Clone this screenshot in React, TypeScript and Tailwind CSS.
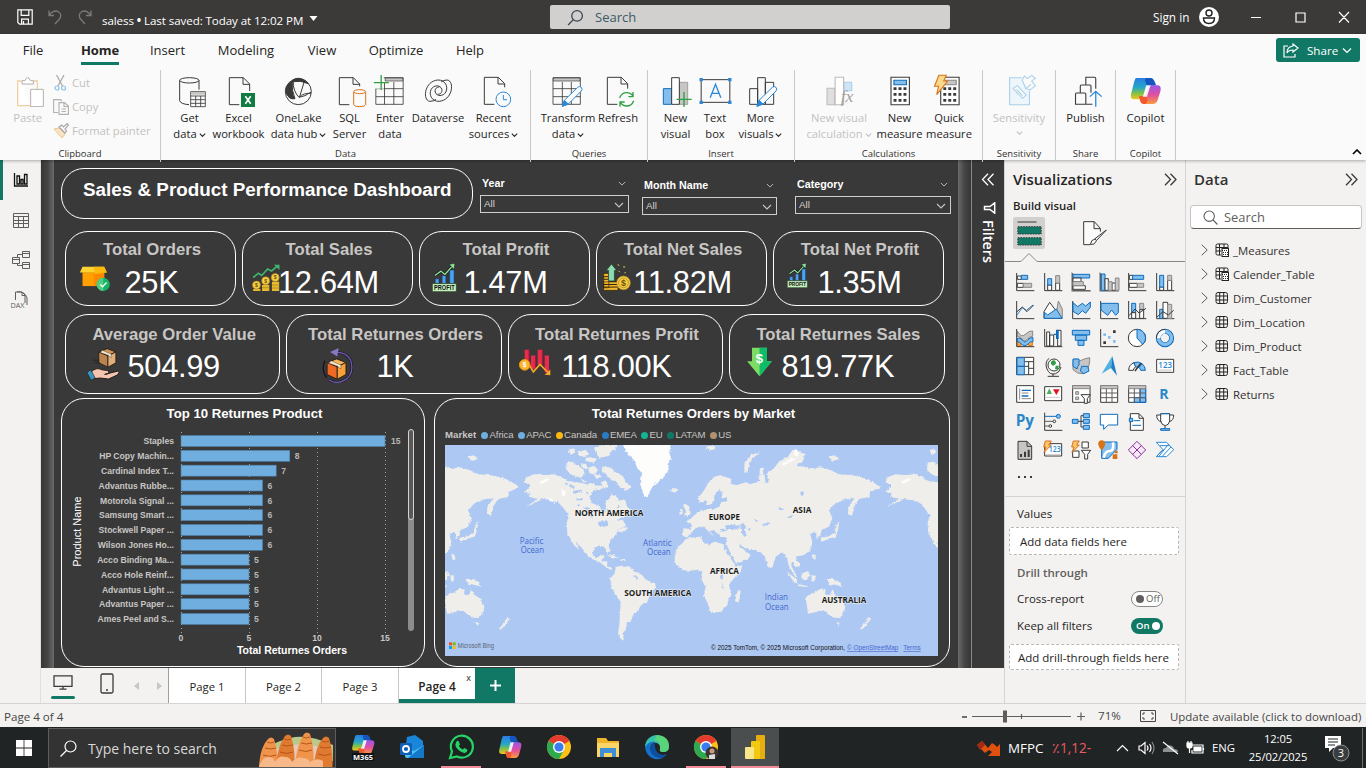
import React from "react";

type Kids = { children?: React.ReactNode };

const INK = "#3b3a39";
const BLUE = "#0f6cbd";
const SKY = "#83beec";
const GREY = "#c8c6c4";

function Chevron({ className = "", color = "currentColor", w = 1.2 }: { className?: string; color?: string; w?: number }) {
  return (
    <svg viewBox="0 0 10 6" className={className} fill="none" stroke={color} strokeWidth={w}>
      <path d="M1 1l4 4 4-4" />
    </svg>
  );
}

/* ---------------------------------------------------------------- title bar */

function TitleBar() {
  return (
    <header className="flex h-[34px] shrink-0 items-center bg-[#3b3a39] text-white">
      <div className="flex w-[550px] items-center">
        <svg viewBox="0 0 16 16" className="ml-[17px] h-[16px] w-[16px]" fill="none" stroke="#fff" strokeWidth="1.2">
          <path d="M.8.8h14.400v14.400H2.600L.8 13.400zM4.200.8v5.600h7.600V.8M4.600 15v-4.800h6.800V15M6.500 15v-3" />
        </svg>
        <svg viewBox="0 0 16 16" className="ml-[14px] h-[16px] w-[16px]" fill="none" stroke="#7d7b79" strokeWidth="1.3">
          <path d="M2 1.500v5h5M2 6.500C4 3 8 1 11 2.500c3.500 2 3.500 5.500 1 8L8 15" />
        </svg>
        <svg viewBox="0 0 16 16" className="ml-[14px] h-[16px] w-[16px]" fill="none" stroke="#7d7b79" strokeWidth="1.3">
          <path d="M14 1.500v5H9M14 6.500C12 3 8 1 5 2.500c-3.500 2-3.500 5.500-1 8L8 15" />
        </svg>
        <span className="ml-[9px] mt-[7px] whitespace-nowrap text-[11.600px] leading-4 tracking-[-0.090px]">saless <b>•</b> Last saved: Today at 12:02 PM</span>
        <svg viewBox="0 0 8 5" className="ml-[6px] mt-[2px] h-[5px] w-[9px]" fill="#fff"><path d="M0 0h8L4 5z" /></svg>
      </div>
      <div className="flex h-[24px] w-[400px] items-center rounded-[2px] bg-[#d2d0ce] text-[#3b5a66]">
        <svg viewBox="0 0 16 16" className="ml-[17px] h-[17px] w-[17px]" fill="none" stroke="#33474f" strokeWidth="1.2"><circle cx="9.500" cy="6.500" r="5" /><path d="M6 10l-5 5" /></svg>
        <span className="ml-[11px] pt-[1px] text-[13px]">Search</span>
      </div>
      <span className="ml-[203px] w-[46px] whitespace-nowrap pt-[2px] text-[11.800px]">Sign in</span>
      <svg viewBox="0 0 20 20" className="h-[20px] w-[20px]"><circle cx="10" cy="10" r="10" fill="#fff" /><circle cx="10" cy="6" r="3" fill="none" stroke="#222" strokeWidth="1.400" /><path d="M4.500 11h11c0 4-2.500 5.500-5.500 5.500S4.500 15 4.500 11z" fill="none" stroke="#222" strokeWidth="1.400" /></svg>
      <svg viewBox="0 0 100 12" className="ml-[32px] h-[12px] w-[100px]" fill="none" stroke="#fff" strokeWidth="1.200"><path d="M0 6.500h10M45 2h9v9h-9zM88 1l10 10.500M98 1L88 11.500" /></svg>
    </header>
  );
}

/* ------------------------------------------------------------------- ribbon */

function Group({ label, className, children }: Kids & { label: string; className: string }) {
  return (
    <section className={`flex h-[92px] shrink-0 flex-col border-r border-[#cbc9c7] ${className}`}>
      <div className="flex h-[75px] justify-center">{children}</div>
      <div className="text-center text-[9.500px] leading-[17px] text-[#323130]">{label}</div>
    </section>
  );
}

function Tool({ w, vb, lines, drop, off, children }: Kids & { w: string; vb: string; lines: string[]; drop?: boolean; off?: boolean }) {
  return (
    <div className={`flex ${w} shrink-0 flex-col items-center pt-[5px] ${off ? "text-[#c3c1bf]" : "text-[#252423]"}`}>
      <svg viewBox={vb} preserveAspectRatio="none" className="h-[32px] w-[32px] shrink-0 overflow-visible" fill="none" stroke={INK} strokeWidth="3">{children}</svg>
      <div className="mt-[3px] whitespace-nowrap text-[11.200px] leading-4">{lines[0]}</div>
      <div className="flex items-center whitespace-nowrap text-[11.200px] leading-4">
        {lines[1]}
        {drop && <Chevron className={`${lines[1] ? "ml-[2px] mt-[2px]" : "mt-[5px]"} h-[4px] w-[7px]`} w={1.700} />}
      </div>
    </div>
  );
}

function CopilotMark({ className, vb }: { className: string; vb: string }) {
  return (
    <svg viewBox={vb} preserveAspectRatio="none" className={className}>
      <defs>
        <linearGradient id="cpA" x1="0" y1="0" x2="0" y2="1"><stop offset="0" stopColor="#2a7de1" /><stop offset=".45" stopColor="#25a7c7" /><stop offset=".7" stopColor="#7cc04b" /><stop offset="1" stopColor="#f4c61a" /></linearGradient>
        <linearGradient id="cpB" x1="0" y1="0" x2="0" y2="1"><stop offset="0" stopColor="#9a57e8" /><stop offset=".5" stopColor="#e04fa0" /><stop offset="1" stopColor="#fb9a3c" /></linearGradient>
      </defs>
      <path d="M941 234h37q8 0 10 9l4 14h-14q-8 0-10 8l-7 23q-3 10-12 10h-12q-14 0-10-16l8-35q3-13 6-13z" fill="url(#cpA)" />
      <path d="M970 234h10q7 0 10 8l5 14h-15q-7 0-9 5l-6-18q-2-7 5-9z" fill="#1555c0" />
      <path d="M991 256h7q12 0 9 16l-8 29q-3 11-14 11h-24q-6 0-9-9l-4-14h8q8 0 11-9l6-18q2-6 8-6z" fill="url(#cpB)" />
      <path d="M949 289h10q6 0 9-7l3 15q2 9-5 15h-6q-5 0-8-8z" fill="#f0592b" />
      <path d="M968 256h12l-10 34h-11z" fill="#fff" opacity=".9" />
    </svg>
  );
}

function Doc({ x, y, cut = 0 }: { x: number; y: number; cut?: number }) {
  return <path d={`M${x + 30} ${y + 81}H${x}V${y}H${x + 42}L${x + 61} ${y + 19}V${y + 40 + cut}M${x + 41} ${y}V${y + 20}H${x + 61}`} fill="#fafafa" />;
}

function Pencil({ x, y }: { x: number; y: number }) {
  return (
    <g transform={`translate(${x} ${y})`} stroke="#2b88d8" strokeWidth="3">
      <path d="M0 59l6-18L46 2q6-5 11 0t0 11L18 52z" fill="#fafafa" />
      <path d="M0 59l6-18 12 11z" fill="#2b88d8" />
    </g>
  );
}

function Ribbon() {
  const tabs: [string, string][] = [["File", "w-[66px]"], ["Home", "w-[68px]"], ["Insert", "w-[67px]"], ["Modeling", "w-[90px]"], ["View", "w-[62px]"], ["Optimize", "w-[86px]"], ["Help", "w-[62px]"]];
  return (
    <div className="relative z-10 h-[126px] shrink-0 bg-[#fafafa] shadow-[0_1px_3px_rgba(0,0,0,0.300)]">
      <nav className="flex h-[32px] items-center text-[13px] text-[#252423]">
        {tabs.map(([t, w]) => (
          <div key={t} className={`flex h-full ${w} shrink-0 items-center justify-center`}>
            <span className={t === "Home" ? "mt-[4px] border-b-[3px] border-[#117865] pb-[1px] font-bold leading-[22px] tracking-[-0.100px]" : "leading-[22px]"}>{t}</span>
          </div>
        ))}
        <button className="ml-auto mr-[6px] flex h-[24px] w-[84px] items-center rounded-[3px] bg-[#117865] text-white">
          <svg viewBox="0 0 16 15" className="ml-[7px] h-[15px] w-[16px]" fill="none" stroke="#fff" strokeWidth="1.200"><path d="M5 3H1v11h11v-3M10 1l5 4-5 4V7C7 7 5 8 4 10c0-4 2-6.500 6-7z" /></svg>
          <span className="ml-[8px] pt-[1px] text-[11.600px]">Share</span>
          <Chevron className="ml-[4px] h-[7px] w-[10px]" />
        </button>
      </nav>
      <div className="flex pt-[4px]">
        <Group label="Clipboard" className="w-[161px]">
          <div className="flex w-[161px]">
            <div className="flex w-[48px] flex-col items-end pt-[5px] text-[#c3c1bf]">
              <svg viewBox="45 225 90 96" className="mr-[3px] h-[32px] w-[30px]" fill="#fff" stroke="#b3b0ad" strokeWidth="3"><path d="M65 243H53v74h38M100 243h12v23" stroke="#f0cfa4" strokeWidth="4" /><path d="M66 252v-10h9q2-9 8-9t8 9h9v10zM92 268h38v52H92z" /></svg>
              <span className="mr-[6px] mt-[3px] text-[11.300px] leading-4">Paste</span>
            </div>
            <div className="ml-[5px] flex flex-col pt-[1px] text-[11.250px] leading-6 text-[#c3c1bf]">
              <div className="flex h-[24px] items-center gap-[4px]"><svg viewBox="0 0 15 16" className="h-[16px] w-[15px]" fill="none" stroke="#a9a7a5" strokeWidth="1.200"><path d="M3.500 0l6 11M11 0L5 11" /><circle cx="4" cy="13" r="2" stroke="#8fc1e3" /><circle cx="10.500" cy="13" r="2" stroke="#8fc1e3" /></svg>Cut</div>
              <div className="flex h-[24px] items-center gap-[3px]"><svg viewBox="0 0 16 16" className="h-[16px] w-[16px]" fill="none" stroke="#b3b0ad" strokeWidth="1.100"><path d="M5 13.500H.6V.6h7L9 2M6 3.600h5.500l3.900 3.500v8.300H6zM11 4v3.500h4M8.500 10h4.500M8.500 12.500h4.500" /></svg>Copy</div>
              <div className="flex h-[24px] items-center gap-[3px]"><svg viewBox="0 0 16 16" className="h-[16px] w-[16px]" fill="none"><path d="M1 6l5-1 6 6-3 4z" fill="#f9e4c5" stroke="#edc58f" /><path d="M6 4l6 6 1.500-2-1.500-2 3.500-4L14 .6 10.500 4 8.500 2z" fill="#fafafa" stroke="#a9a7a5" strokeWidth="1.200" /></svg>Format painter</div>
            </div>
          </div>
        </Group>
        <Group label="Data" className="w-[370px]">
          <Tool w="w-[44px]" vb="519 225 96 96" lines={["Get", "data"]} drop>
            <ellipse cx="565" cy="241" rx="29" ry="8" /><path d="M536 241v61q2 10 28 12M594 241v28" />
            <path d="M569 275h44v45h-44zM569 288h44M569 299h44M569 310h44M584 288v32M599 288v32" strokeWidth="2.500" /><path d="M570 276h42v8h-42z" fill={GREY} stroke="none" />
          </Tool>
          <Tool w="w-[54px]" vb="666 225 96 96" lines={["Excel", "workbook"]}>
            <Doc x={685} y={233} /><path d="M720 279h42v42h-42z" fill="#107c41" stroke="none" /><path d="M733 289l16 22M749 289l-16 22" stroke="#fff" strokeWidth="5" />
          </Tool>
          <Tool w="w-[66px]" vb="848 225 96 96" lines={["OneLake", "data hub"]} drop>
            <circle cx="894" cy="275" r="39" /><path d="M876 241q16-12 36-1 8 4 12 11-24-11-46-6z" fill={INK} /><path d="M856 268q6-20 22-26-6 30 6 54-8 2-16-2-12-10-12-26z" fill={INK} /><path d="M878 242q0 32 18 50 18-2 36-16M912 244l-14 46M896 292q14-14 36-12" />
          </Tool>
          <Tool w="w-[36px]" vb="999 225 96 96" lines={["SQL", "Server"]}>
            <Doc x={1015} y={233} cut={-14} /><g stroke="#d8731a" fill="#fafafa"><path d="M1058 276v38q2 6 18 6t18-6v-38" /><ellipse cx="1076" cy="275" rx="18" ry="6" /></g>
          </Tool>
          <Tool w="w-[45px]" vb="100.500 39 96 96" lines={["Enter", "data"]}>
            <path d="M106 47h82v80h-82zM106 80h82M106 104h82M132 60v67M160 60v67" strokeWidth="2.500" /><path d="M134 48h53v9h-53z" fill={GREY} strokeWidth="2" /><path d="M98 40h32v40H98z" fill="#fafafa" stroke="none" /><path d="M100 62h45M122 39v45" stroke="#2ea043" strokeWidth="4" />
          </Tool>
          <Tool w="w-[51px]" vb="244.500 39 96 96" lines={["Dataverse", ""]}>
            <path d="M268 118c-22-2-18-60 24-64 22-1 32 20 24 36-8 14-28 14-32 0-2-10 6-16 12-14" /><path d="M320 54c22 2 18 60-24 64-22 1-32-20-24-36 8-14 28-14 32 0 2 10-6 16-12 14M268 118q12 0 18-6M320 54q-12 0-18 6" />
          </Tool>
          <Tool w="w-[60px]" vb="411 39 96 96" lines={["Recent", "sources"]} drop>
            <Doc x={430} y={46} cut={-10} /><circle cx="487" cy="112" r="22" stroke="#2b88d8" fill="#fafafa" /><path d="M487 99v14h11" stroke="#2b88d8" />
          </Tool>
        </Group>
        <Group label="Queries" className="w-[117px]">
          <Tool w="w-[58px]" vb="637 39 96 96" lines={["Transform", "data"]} drop>
            <path d="M640 47h82v80h-82zM640 80h82M640 104h82M668 60v67M695 60v67" strokeWidth="2.500" /><path d="M641 48h80v9h-80z" fill={GREY} strokeWidth="2" /><Pencil x={668} y={74} />
          </Tool>
          <Tool w="w-[42px]" vb="783 39 96 96" lines={["Refresh", ""]}>
            <Doc x={799} y={46} cut={-6} /><g stroke="#2ea043" strokeWidth="4"><circle cx="857" cy="112" r="24" fill="#fafafa" stroke="none" /><path d="M836 108q6-16 21-16 12 0 19 10M876 90v14h-14M878 116q-6 16-21 16-12 0-19-10M837 134v-14h14" /></g>
          </Tool>
        </Group>
        <Group label="Insert" className="w-[147px]">
          <Tool w="w-[40px]" vb="960 39 96 96" lines={["New", "visual"]}>
            <path d="M970 80h25v47h-25z" fill={SKY} stroke={BLUE} /><path d="M1018 61h25v66h-25z" fill={GREY} stroke="#a19f9d" /><path d="M995 47h23v80h-23z" fill="#fff" /><path d="M1010 112h45M1032 90v45" stroke="#2ea043" strokeWidth="4" />
          </Tool>
          <Tool w="w-[39px]" vb="1078.500 39 96 96" lines={["Text", "box"]}>
            <path d="M1085 53h86v68h-86z" /><g fill="#2b88d8" stroke="none"><path d="M1080 48h10v10h-10zM1166 48h10v10h-10zM1080 116h10v10h-10zM1166 116h10v10h-10z" /></g><path d="M1112 107l16-40 16 40M1118 94h20" stroke="#2b88d8" strokeWidth="4" />
          </Tool>
          <Tool w="w-[52px]" vb="1212 39 96 96" lines={["More", "visuals"]} drop>
            <path d="M1226 80h24v47h-24zM1250 47h23v80h-23zM1273 61h25v66h-25z" /><Pencil x={1248} y={74} />
          </Tool>
        </Group>
        <Group label="Calculations" className="w-[188px]">
          <Tool w="w-[72px]" vb="90 225 87 96" lines={["New visual", "calculation"]} drop off>
            <path d="M101 265h21v49h-21z" fill="#e1dfdd" stroke="#bebbb8" /><path d="M147 247h21v25h-21z" fill="#cfe4f5" stroke="#a9cfec" /><path d="M123 232h23v82h-23z" fill="#fff" stroke="#bebbb8" /><text x="138" y="307" fontSize="48" fontStyle="italic" fontFamily="Liberation Serif, serif" fill="#a3a09e" stroke="none">fx</text>
          </Tool>
          <Tool w="w-[49px]" vb="254 225 87 96" lines={["New", "measure"]}>
            <path d="M273 232h50v82h-50z" fill="#fff" /><path d="M281 241h34v13h-34z" fill={SKY} stroke={BLUE} /><path d="M280 266h35M280 283h35M280 301h35" strokeWidth="8" strokeDasharray="8 5.500" />
          </Tool>
          <Tool w="w-[50px]" vb="388 225 87 96" lines={["Quick", "measure"]}>
            <path d="M409 232h50v82h-50z" fill="#fff" /><path d="M422 241h29v13h-29z" fill={GREY} stroke="#8a8886" /><path d="M416 266h35M416 283h35M416 301h35" strokeWidth="8" strokeDasharray="8 5.500" /><path d="M404 226h20l-7 17h11l-30 41 5-25h-11z" fill="#fbd98b" stroke="#d8731a" />
          </Tool>
        </Group>
        <Group label="Sensitivity" className="w-[73px]">
          <Tool w="w-[73px]" vb="580 225 87 96" lines={["Sensitivity", ""]} drop off>
            <g stroke="#a9d0ea"><path d="M630 233h-32v81h54v-42" fill="#eef6fb" /><path d="M607 265l12-8 24 28-10 10zM617 268l16 19M632 240l10 26 12 4 14-13-10-14 10-8-10-9-12 10-8-8zM642 266l14-13" fill="#fafafa" /></g>
          </Tool>
        </Group>
        <Group label="Share" className="w-[60px]">
          <Tool w="w-[60px]" vb="762 225 87 96" lines={["Publish", ""]}>
            <path d="M805 254v-22h24q3 0 3 4v30M790 278v-20q0-3 3-3h23q3 0 3 3v20M777 313v-31q0-3 3-3h22q3 0 3 3v31zM805 313h18" /><path d="M832 320v-46M816 290l16-16 16 16" stroke="#2b88d8" strokeWidth="3.500" />
          </Tool>
        </Group>
        <Group label="Copilot" className="w-[60px]">
          <div className="flex w-[60px] flex-col items-center pt-[5px]"><CopilotMark className="h-[32px] w-[32px] overflow-visible" vb="924 225 87 96" /><span className="mt-[3px] text-[11.500px] leading-4 text-[#252423]">Copilot</span></div>
        </Group>
        <Chevron className="mb-[7px] ml-auto mr-[4px] h-[6px] w-[10px] rotate-180 self-end" w={1.600} />
      </div>
    </div>
  );
}

/* ---------------------------------------------------------------- left rail */

function Rail() {
  return (
    <aside className="flex w-[41px] shrink-0 flex-col border-r border-[#e1dfdd] bg-[#f3f2f1]">
      <div className="flex h-[40px] items-center border-l-[3px] border-[#117865] pl-[10px]"><svg viewBox="0 0 16 16" className="h-[16px] w-[16px]" fill="none" stroke="#111" strokeWidth="1.300"><path d="M1.500 1v13H15M4 4h2.500v8H4zM8 7.500h2V12H8zM11.500 2.500H14V12h-2.500z" /></svg></div>
      <div className="flex h-[40px] items-center pl-[13px]"><svg viewBox="0 0 16 15" className="h-[15px] w-[16px]" fill="none" stroke="#605e5c"><path d="M.5.5h15v14H.5zM.5 3.500h15M.5 7.500h15M.5 10.500h15M5.500 3v11.500M10.500 3v11.500" /></svg></div>
      <div className="flex h-[40px] items-center pl-[12px]"><svg viewBox="0 0 18 18" className="h-[18px] w-[18px]" fill="none" stroke="#605e5c"><path d="M.5 6.500h7v6h-7zM.5 8.500h7M10.500.5h7v6h-7zM10.500 2.500h7M10.500 11.500h7v6h-7zM10.500 13.500h7M5.500 6V3.500h5M5.500 13v1.500h5" /></svg></div>
      <div className="flex h-[40px] items-center pl-[10px]"><svg viewBox="0 0 20 18" className="h-[18px] w-[20px] overflow-visible" fill="none" stroke="#605e5c"><path d="M5.500 9V1h6.500l3 3v8M12 1v3.500h3M7 .8q8-.8 10 6.200v7" /><text x="0.500" y="17" fontSize="8" textLength="14" lengthAdjust="spacingAndGlyphs" fontFamily="Open Sans, sans-serif" fill="#605e5c" stroke="none">DAX</text></svg></div>
    </aside>
  );
}

/* ---------------------------------------------------------------- dashboard */

function Slicer({ label, className, top }: { label: string; className: string; top: string }) {
  return (
    <div className={`flex flex-col ${className} ${top}`}>
      <div className="flex h-[18px] items-center pl-[2px] pr-[3px] pt-[1px] text-[10.700px] font-bold text-white"><span>{label}</span><Chevron className="ml-auto h-[5px] w-[8px]" color="#c8c6c4" w={1.100} /></div>
      <div className="mt-[3px] flex h-[18px] items-center border border-[#d0cecc] pl-[3px] pr-[4px] pt-[1px] text-[9.800px] text-[#d6d4d2]"><span>All</span><Chevron className="ml-auto mt-[1px] h-[6px] w-[10px]" color="#c8c6c4" w={1.100} /></div>
    </div>
  );
}

function Kpi({ title, value, big, iconAt, icon }: { title: string; value: string; big?: boolean; iconAt: string; icon: React.ReactNode }) {
  return (
    <div className={`relative flex flex-1 flex-col items-center rounded-[23px] border border-white ${big ? "h-[80px] pt-[10px]" : "h-[75px] pt-[8px]"}`}>
      <div className="whitespace-nowrap pl-[3px] text-[16.700px] font-bold leading-[20px] text-[#c8c6c4]">{title}</div>
      <div className={`whitespace-nowrap text-[30.800px] leading-[34px] tracking-[-0.300px] text-white ${big ? "mt-[5px] pl-[2px]" : "mt-[6px] pl-[2px]"}`}>{value}</div>
      <span className={`absolute ${iconAt}`}>{icon}</span>
    </div>
  );
}

const BoxIcon = () => (
  <svg viewBox="240 316 90 76" className="h-[25px] w-[30px]"><path d="M247 335h66v42h-66z" fill="#ffa000" /><path d="M281 335h32v42h-32z" fill="#ff8a00" /><path d="M247 318h66l8 18h-82z" fill="#fdd231" /><path d="M281 318h32l8 18-36 4z" fill="#fbb80f" /><circle cx="310" cy="372" r="20" fill="#16b364" /><path d="M310 352a20 20 0 00 0 40z" fill="#5fd38d" opacity=".8" /><path d="M301 372l7 7 12-13" fill="none" stroke="#fff" strokeWidth="4" /></svg>
);
const Coin = ({ x, y, r = 12 }: { x: number; y: number; r?: number }) => (
  <g><circle cx={x} cy={y} r={r} fill="#f6cf4a" stroke="#b98a14" strokeWidth="2" /><text x={x} y={y + r * 0.45} textAnchor="middle" fontSize={r * 1.300} fontWeight="700" fontFamily="Liberation Sans, sans-serif" fill="#6b4e00">$</text></g>
);
const SalesIcon = () => (
  <svg viewBox="756 312 84 82" className="h-[27px] w-[28px]"><path d="M759 353l16-13 10 7 18-20 12 6 20-17" fill="none" stroke="#3fb56f" strokeWidth="5" /><path d="M822 314h17v16z" fill="#3fb56f" /><path d="M786 376h22v18h-22zM816 366h22v28h-22zM759 388h22v6h-22z" fill="#e6b930" /><path d="M786 384h22M816 376h22M816 385h22" stroke="#a57a10" strokeWidth="2" /><Coin x={769} y={376} /><Coin x={797} y={363} /><Coin x={826} y={353} /></svg>
);
const ProfitIcon = ({ className }: { className: string }) => (
  <svg viewBox="1296 308 76 86" preserveAspectRatio="none" className={className}><path d="M1306 355h11v14h-11zM1327 345h11v24h-11zM1350 329h13v40h-13z" fill="#4aa3f5" stroke="#143b6b" strokeWidth="1.500" /><path d="M1305 345l18-13 12 10 24-26" fill="none" stroke="#111" strokeWidth="8" /><path d="M1305 345l18-13 12 10 24-26" fill="none" stroke="#8fe39b" strokeWidth="4" /><path d="M1348 312l18-3-3 18z" fill="#8fe39b" stroke="#111" strokeWidth="1.500" /><path d="M1297 369h73v24h-73z" fill="#c5f0bd" stroke="#1d3a1d" strokeWidth="2" /><text x="1302" y="388" fontSize="20" fontWeight="700" textLength="63" lengthAdjust="spacingAndGlyphs" fontFamily="Liberation Sans, sans-serif" fill="#111">PROFIT</text></svg>
);
const NetSalesIcon = () => (
  <svg viewBox="398 308 86 86" className="h-[28px] w-[28px]"><path d="M400 340h16v44h-16zM400 366h44v26h-44z" fill="#f4b72e" stroke="#2b2208" strokeWidth="2" /><path d="M400 350h16M400 358h16M400 374h42M400 382h42" stroke="#2b2208" strokeWidth="3" /><path d="M424 311l16 20h-7v32h-18v-32h-7z" fill="#8ed9b0" stroke="#1d3a2b" strokeWidth="2" /><Coin x={461} y={369} r={21} /><circle cx="461" cy="369" r="15" fill="none" stroke="#a8780d" strokeWidth="2" /><path d="M444 312l3 5M460 320h6M446 332l3 4M464 338h4" stroke="#f4d03f" strokeWidth="3" /></svg>
);
const Parcel = ({ l, r, t }: { l: string; r: string; t: string }) => (
  <g stroke="#231a12" strokeWidth="2.500"><path d="M0 10L26 0l26 10-24 12z" fill={t} /><path d="M0 10l28 12v34L0 43z" fill={l} /><path d="M52 10L28 22v34l24-13z" fill={r} /><path d="M11 5l27 12v10l-6-3-3-4L5 12z" fill="#f4e6cf" strokeWidth="1" /></g>
);
const HandIcon = () => (
  <svg viewBox="256 564 102 100" className="h-[33px] w-[34px]"><g transform="translate(294 566)"><Parcel l="#b9824e" r="#e0b07a" t="#cf965c" /></g><path d="M278 601h18M282 609h16" stroke="#222" strokeWidth="3" /><path d="M270 638q16-18 34-8l16 2q10 4 2 10l-10 2 40-10q8 4-2 12l-26 12-26-3-18 2z" fill="#f3c5b0" stroke="#231a12" strokeWidth="3" /><path d="M258 638l12-8 13 25-12 7z" fill="#3596c4" stroke="#231a12" strokeWidth="2" /></svg>
);
const ReturnIcon = () => (
  <svg viewBox="965 562 96 106" className="h-[35px] w-[32px]"><path d="M1000 574q58 0 58 46a45 45 0 01-70 38" fill="none" stroke="#1c1730" strokeWidth="8" /><path d="M1000 574q58 0 58 46a45 45 0 01-70 38" fill="none" stroke="#6f5aa8" strokeWidth="4" /><path d="M976 600q-12 30 6 52" fill="none" stroke="#17141f" strokeWidth="4" /><path d="M1018 562l-26 12 22 14z" fill="#8a75c2" /><g transform="translate(983 595) scale(1.100)"><Parcel l="#ee6a24" r="#f9a03a" t="#fbb65b" /></g></svg>
);
const LossIcon = () => (
  <svg viewBox="146 566 96 80" className="h-[27px] w-[32px]"><path d="M163 568h13v45h-13zM182 585h13v40h-13zM202 568h14v45h-14zM223 585h13v50h-13z" fill="#ea2c4c" /><path d="M176 568v45M195 585v40M216 568v45" stroke="#b3163a" strokeWidth="3" /><path d="M177 614l12 20 20-22 24 24" fill="none" stroke="#f9a62b" strokeWidth="5" /><path d="M240 644v-17l-17 16z" fill="#f9a62b" /><circle cx="163" cy="613" r="16" fill="#fbb52f" stroke="#e8920c" strokeWidth="3" /><text x="163" y="620" textAnchor="middle" fontSize="20" fontWeight="700" fill="#fff" fontFamily="Liberation Sans, sans-serif">$</text></svg>
);
const DownIcon = () => (
  <svg viewBox="831 560 76 92" className="h-[30px] w-[25px]"><path d="M846 562h46v42h15l-38 46-38-46h15z" fill="#7ddc63" /><path d="M869 562h23v42h15l-38 46z" fill="#0ebd6a" /><text x="869" y="609" textAnchor="middle" fontSize="40" fontWeight="700" fill="#fff" fontFamily="Liberation Sans, sans-serif">$</text></svg>
);

const returned: [string, number][] = [["Staples", 15], ["HP Copy Machin...", 8], ["Cardinal Index T...", 7], ["Advantus Rubbe...", 6], ["Motorola Signal ...", 6], ["Samsung Smart ...", 6], ["Stockwell Paper ...", 6], ["Wilson Jones Ho...", 6], ["Acco Binding Ma...", 5], ["Acco Hole Reinf...", 5], ["Advantus Light ...", 5], ["Advantus Paper ...", 5], ["Ames Peel and S...", 5]];

function ProductChart() {
  return (
    <div className="flex h-[269px] w-[364px] flex-col rounded-[23px] border border-white">
      <h3 className="pl-[3px] pt-[7px] text-center text-[13.200px] font-bold leading-[15px] text-white">Top 10 Returnes Product</h3>
      <svg viewBox="62 421 362 240" className="h-[240px] w-[362px]" fontFamily="Liberation Sans, Arial, sans-serif">
        {[0, 5, 10, 15].map((v) => (
          <g key={v}>
            <path d={`M${181.500 + v * 13.600} 432V633`} stroke="#a5a3a1" strokeWidth="1" strokeDasharray="1 3" />
            <text x={181 + v * 13.600} y="641" textAnchor="middle" fontSize="8.600" fontWeight="700" fill="#c8c6c4">{v}</text>
          </g>
        ))}
        {returned.map(([name, n], i) => {
          const y = 441 + i * 14.830;
          return (
            <g key={name} fill="#c8c6c4" fontSize="8.600">
              <text x="174" y={y + 3.300} textAnchor="end" fontWeight="700">{name}</text>
              <rect x="181" y={y - 5.500} width={n * 13.600} height="11" fill="#70aedf" stroke="#4f7fa6" strokeWidth=".6" />
              <text x={186 + n * 13.600 + (n === 15 ? 1 : 0)} y={y + 3.300} fontWeight="700" fill="#b8b6b4">{n}</text>
            </g>
          );
        })}
        <rect x="408" y="430" width="6" height="201" rx="3" fill="#8e8c8a" />
        <rect x="408.500" y="429.500" width="5" height="90" rx="2.500" fill="#5a5957" stroke="#d6d4d2" />
        <text x="292" y="654" textAnchor="middle" fontSize="10.500" fontWeight="700" fill="#fff">Total Returnes Orders</text>
        <text transform="translate(81 531.500) rotate(-90)" textAnchor="middle" fontSize="11" fill="#fff">Product Name</text>
      </svg>
    </div>
  );
}

function Land() {
  return (
    <g>
      <path d="M275 248L300 238 330 240 360 238 385 248 400 258 430 262 460 268 472 262 490 272 508 270 505 283 480 285 466 305 475 325 497 333 505 352 514 350 516 332 512 318 526 312 530 298 548 305 556 318 572 312 580 335 592 348 585 362 560 368 548 378 566 374 576 392 552 404 545 420 530 435 524 450 528 470 520 474 512 455 495 452 480 458 475 480 486 490 504 478 512 482 502 497 520 500 520 514 535 520 530 525 512 513 492 500 470 490 458 478 440 455 424 440 436 466 420 450 400 415 398 385 404 360 385 335 372 322 350 315 325 312 300 325 275 335 312 312 285 305 290 295 270 290 290 272 272 262z" />
      <path d="M398 203L415 200 430 212 448 222 452 238 440 248 420 243 408 236 396 224zM404 165l14-5 6 12-14 8zM430 172l24-8 12 14-22 10zM455 185l30 4-4 14-26-4zM480 158l20-8 50 0-6 14-14 6-6 14-28 4-10-14zM505 214l26 4 14 14 22 12 8 18 16 14-12 10-20-8-10-16-22-10-10-14-14-8zM500 262l14-6 10 16-12 10zM462 218l18-6 12 12-10 16-16-6zM440 205l16 2 6 14-18-2zM545 410l20-12 14-4 2 10-22 8zM480 240l16-4 6 10-14 6zM442 250l18 0 4 10-18 2z" />
      <path d="M518 482l18-2 18 10-14-2zM558 492l14 0 4 5-14 0zM100 185l18-4 14 8-20 6z" />
      <path d="M545 515L565 512 590 517 605 530 625 540 635 555 665 565 662 580 648 600 640 620 620 632 610 650 598 658 592 675 578 685 575 705 566 715 570 738 560 733 552 715 556 690 558 655 560 620 545 600 530 570 530 550 542 535z" />
      <path d="M755 432L780 427 800 425 805 440 825 450 840 440 870 448 878 470 890 490 905 512 925 510 920 530 900 550 885 570 892 600 885 610 880 630 862 650 832 655 825 635 810 600 815 575 800 550 805 532 790 524 765 528 745 525 722 505 722 485 728 460 745 445z" />
      <path d="M915 583l6 15-8 25-10-4 2-19zM708 287l14-9 12 6-12 9zM748 328l10-2 12 22-2 14-18 2 6-12zM738 345l8-2 0 14-10 2zM930 232l2-30 18-22 28-8-24 20-10 20-4 22zM1185 183l20 2 10 8-18 4zM815 156l20-6 10 10-14 6zM1160 428l24-4 18-10 4-22 10-14-4 26-6 20-30 12-14 4z" />
      <path d="M748 400L770 402 772 386 756 380 775 366 792 352 812 345 820 342 840 342 856 335 862 322 880 318 878 306 862 312 866 290 856 282 842 300 836 325 822 330 815 315 800 322 790 310 808 290 822 265 842 245 860 240 892 252 890 268 910 270 935 262 950 268 975 258 978 220 988 218 995 265 1004 262 1000 235 1020 220 1035 200 1060 185 1080 160 1112 178 1108 198 1085 212 1110 215 1140 222 1155 215 1190 225 1215 238 1250 240 1290 248 1315 260 1340 277 1320 285 1305 292 1308 305 1275 312 1262 332 1254 362 1242 358 1243 335 1262 310 1235 313 1205 325 1185 345 1195 370 1185 395 1164 405 1158 422 1148 432 1146 412 1128 416 1135 440 1130 465 1110 480 1085 485 1090 498 1102 512 1085 517 1074 500 1072 514 1092 548 1080 540 1064 512 1060 490 1045 472 1025 485 1016 515 1005 522 995 490 985 475 965 465 950 465 925 460 950 480 940 495 907 506 890 480 873 450 880 428 858 425 853 411 880 408 866 400 852 418 840 405 828 408 838 425 820 405 804 393 785 400 770 415 760 427 746 422z" />
      <path d="M1058 528l28 24 6 15-14-8zM1102 538l20-10 6 10-10 18-16-4zM1092 568l30 4-2 4-28-3zM1132 540l14 2-6 18-6-2zM1178 552l20 0 18 10 10 14-26-8-12 4zM1135 478l8 0 4 20-8-6z" />
      <path d="M1115 605L1143 592 1158 582 1175 583 1173 598 1188 600 1195 583 1205 600 1218 608 1234 632 1231 650 1218 669 1201 668 1183 658 1168 645 1143 652 1122 656 1118 630zM1207 682l12 2-6 8zM1278 702l14-18 12-18 6 6-14 20-14 12z" />
    </g>
  );
}

const markets: [string, string][] = [["Africa", "bg-[#70aedf]"], ["APAC", "bg-[#70aedf]"], ["Canada", "bg-[#fdb813]"], ["EMEA", "bg-[#2b7cc4]"], ["EU", "bg-[#14b391]"], ["LATAM", "bg-[#117865]"], ["US", "bg-[#b3926b]"]];

function MarketMap() {
  return (
    <div className="flex h-[269px] w-[516px] flex-col rounded-[23px] border border-white pl-[10px]">
      <h3 className="pr-[7px] pt-[7px] text-center text-[13.200px] font-bold leading-[15px] text-white">Total Returnes Orders by Market</h3>
      <div className="mt-[7px] flex h-[15px] items-center text-[9.600px] tracking-[-0.100px] text-[#c8c6c4]">
        <b className="mr-[5px] tracking-[0.050px]">Market</b>
        {markets.map(([m, c]) => (
          <span key={m} className="mr-[4.500px] flex items-center"><i className={`mr-[1.300px] h-[7px] w-[7px] rounded-full ${c}`} />{m}</span>
        ))}
      </div>
      <svg viewBox="33 150 1479 633" className="mt-[2px] h-[211px] w-[493px]" fontFamily="Open Sans, sans-serif">
        <defs>
          <filter id="coast" x="-5%" y="-5%" width="110%" height="110%"><feTurbulence type="fractalNoise" baseFrequency="0.120" numOctaves="3" seed="4" /><feDisplacementMap in="SourceGraphic" scale="9" xChannelSelector="R" yChannelSelector="G" /></filter>
        </defs>
        <rect x="33" y="150" width="1479" height="633" fill="#adc8f3" />
        <g filter="url(#coast)" fill="#efeeea">
          <g transform="translate(-1083 0)"><Land /></g>
          <Land />
          <g transform="translate(1083 0)"><Land /></g>
          <path d="M567 148H710L706 175 712 190 700 210 705 225 690 245 672 262 655 275 640 305 630 302 622 280 618 255 625 235 610 220 600 195 585 180 572 165zM315 262l26-12 6 4-22 12zM335 308l20 4 10 12-16-6zM382 280l12 10-2 14-8-4zM1045 205l35-18 4 6-34 18zM1082 160l14 14-6 12-10-6zM1398 262l26-12 6 4-22 12z" fill="#fdfdfc" />
          <g fill="#adc8f3">
            <path d="M874 392l18-6 14 6 10-2 2 10-20 4-22 0zM918 388l12-4 6 12-4 10 6 16-8 4-8-16zM868 448l10 2 22 44 4 10-8-6-22-36zM915 444l14 14 18 4-4 6-22-10zM1098 292l10-4 2 10-8 6zM1034 338l18 4-16 6zM492 382l26-6 8 12-16 8-16-4zM416 288l24-4 4 6-22 6zM428 310l20 0-4 6-16 0zM405 270l16 2 0 8-14-4zM445 335l22 4 2 8-14-4zM860 538l8 2-2 14-8-4zM960 372l16 6-12 4zM985 388l20-6 4 6-18 6zM1060 368l14-10-2 12zM595 540l20 8-6 4zM940 400l10 0-4 8zM865 562l4 20-6-4zM470 350l8 14-6 4zM392 262l12 4-8 6zM455 290l10 2-6 8zM520 340l6 8-8 4zM552 330l8 4-8 6zM430 328l10 2-8 5z" />
            <path d="M450 240l30 16 28-6 4 8-36 8-30-12z" />
          </g>
        </g>
        <g fontSize="26" fontWeight="700" fill="#1b1b1b" stroke="#f6f5f2" strokeWidth="2.500" paintOrder="stroke">
          <text x="422" y="362" textLength="206" lengthAdjust="spacingAndGlyphs">NORTH AMERICA</text>
          <text x="824" y="375" textLength="94" lengthAdjust="spacingAndGlyphs">EUROPE</text>
          <text x="1076" y="354" textLength="56" lengthAdjust="spacingAndGlyphs">ASIA</text>
          <text x="828" y="536" textLength="87" lengthAdjust="spacingAndGlyphs">AFRICA</text>
          <text x="571" y="604" textLength="201" lengthAdjust="spacingAndGlyphs">SOUTH AMERICA</text>
          <text x="1163" y="623" textLength="134" lengthAdjust="spacingAndGlyphs">AUSTRALIA</text>
        </g>
        <g fontSize="24.500" fill="#4468d0">
          <text x="257" y="447" textLength="71" lengthAdjust="spacingAndGlyphs">Pacific</text><text x="260" y="475" textLength="70" lengthAdjust="spacingAndGlyphs">Ocean</text>
          <text x="627" y="453" textLength="86" lengthAdjust="spacingAndGlyphs">Atlantic</text><text x="639" y="481" textLength="71" lengthAdjust="spacingAndGlyphs">Ocean</text>
          <text x="992" y="616" textLength="70" lengthAdjust="spacingAndGlyphs">Indian</text><text x="993" y="644" textLength="71" lengthAdjust="spacingAndGlyphs">Ocean</text>
        </g>
        <path d="M45 742h9v9h-9z" fill="#f25022" /><path d="M56 742h9v9h-9z" fill="#7fba00" /><path d="M45 753h9v9h-9z" fill="#00a4ef" /><path d="M56 753h9v9h-9z" fill="#ffb900" />
        <g fontFamily="Liberation Sans, sans-serif" fontSize="19">
          <text x="71" y="759" fill="#5c6470" textLength="109" lengthAdjust="spacingAndGlyphs">Microsoft Bing</text>
          <text x="831" y="765" fill="#111" textLength="402" lengthAdjust="spacingAndGlyphs">© 2025 TomTom, © 2025 Microsoft Corporation,</text>
          <text x="1239" y="765" fill="#4468d0" textLength="154" lengthAdjust="spacingAndGlyphs" textDecoration="underline">© OpenStreetMap</text>
          <text x="1408" y="765" fill="#4468d0" textLength="52" lengthAdjust="spacingAndGlyphs" textDecoration="underline">Terms</text>
        </g>
      </svg>
    </div>
  );
}

function Dashboard() {
  return (
    <main className="flex h-[508px] w-[931px] shrink-0 overflow-hidden border-r border-[#8a8886] bg-[#393939] font-['Liberation_Sans',Arial,sans-serif]">
      <div className="w-[13px] shrink-0 bg-linear-to-r from-[#363636] via-[#454545] to-[#6b6b6b]" />
      <div className="flex w-[904px] shrink-0 flex-col pl-[7px] pt-[8px]">
        <div className="flex h-[63px]">
          <h1 className="h-[51px] w-[412px] whitespace-nowrap rounded-[23px] border border-white pl-[21px] pt-[8px] text-[18.850px] font-bold leading-[25px] text-white">Sales &amp; Product Performance Dashboard</h1>
          <Slicer label="Year" className="ml-[7px] w-[149px]" top="pt-[6px]" />
          <Slicer label="Month Name" className="ml-[13px] w-[135px]" top="pt-[8px]" />
          <Slicer label="Category" className="ml-[18px] w-[156px]" top="pt-[7px]" />
        </div>
        <div className="ml-[4px] flex w-[879px] gap-[6px]">
          <Kpi title="Total Orders" value="25K" iconAt="left-[14px] top-[34px]" icon={<BoxIcon />} />
          <Kpi title="Total Sales" value="12.64M" iconAt="left-[9px] top-[32px]" icon={<SalesIcon />} />
          <Kpi title="Total Profit" value="1.47M" iconAt="left-[12px] top-[31px]" icon={<ProfitIcon className="h-[29px] w-[25px]" />} />
          <Kpi title="Total Net Sales" value="11.82M" iconAt="left-[6px] top-[31px]" icon={<NetSalesIcon />} />
          <Kpi title="Total Net Profit" value="1.35M" iconAt="left-[13px] top-[31px]" icon={<ProfitIcon className="h-[25px] w-[21px]" />} />
        </div>
        <div className="ml-[4px] mt-[8px] flex w-[879.500px] gap-[6px]">
          <Kpi big title="Average Order Value" value="504.99" iconAt="left-[20px] top-[33px]" icon={<HandIcon />} />
          <Kpi big title="Total Returnes Orders" value="1K" iconAt="left-[34px] top-[33px]" icon={<ReturnIcon />} />
          <Kpi big title="Total Returnes Profit" value="118.00K" iconAt="left-[10px] top-[34px]" icon={<LossIcon />} />
          <Kpi big title="Total Returnes Sales" value="819.77K" iconAt="left-[17px] top-[32px]" icon={<DownIcon />} />
        </div>
        <div className="mt-[4px] flex gap-[9px]">
          <ProductChart />
          <MarketMap />
        </div>
      </div>
      <div className="w-[13px] shrink-0 bg-linear-to-r from-[#6b6b6b] via-[#454545] to-[#363636]" />
    </main>
  );
}

/* -------------------------------------------------------------- side panels */

function DoubleChevron({ className, color = "#3b3a39" }: { className: string; color?: string }) {
  return <svg viewBox="0 0 13 13" className={className} fill="none" stroke={color} strokeWidth="1.300"><path d="M1 .8l5.500 5.700L1 12.200M6.500.8L12 6.500l-5.500 5.700" /></svg>;
}

function FiltersStrip() {
  return (
    <div className="flex h-[508px] w-[32px] shrink-0 flex-col items-center bg-[#393939]">
      <DoubleChevron className="mt-[13px] h-[13px] w-[14px] rotate-180" color="#fff" />
      <svg viewBox="0 0 12 12" className="ml-[3px] mt-[16px] h-[12px] w-[13px]" fill="none" stroke="#fff" strokeWidth="1.500"><path d="M11.200 .8v10.400L6.500 7.500H1V4.500h5.500z" /></svg>
      <span className="mt-[6px] text-[14.400px] font-semibold leading-[16px] text-white [writing-mode:vertical-rl]">Filters</span>
    </div>
  );
}

const axis = (x: number, y: number) => <path d={`M${x} ${y}v53h53`} stroke={INK} />;
const B = { fill: SKY, stroke: BLUE };
const G = { fill: GREY, stroke: "#8a8886" };
const W = { fill: "#fff", stroke: INK };

const visuals: React.ReactNode[] = [
  <>{axis(35, 24)}<path d="M37 33h12v10H37z" {...W} /><path d="M49 31h19v12H49z" {...B} /><path d="M37 55h18v12H37z" {...W} /><path d="M55 55h25v12H55z" {...G} /></>,
  <>{axis(119, 24)}<path d="M128 60h12v16h-12zM152 54h12v22h-12z" {...W} /><path d="M128 41h12v19h-12z" {...B} /><path d="M152 32h12v22h-12z" {...G} /></>,
  <>{axis(203, 24)}<path d="M204 28h50v11h-50z" {...B} /><path d="M204 39h24v11h-24zM204 62h37v11h-37z" {...W} /><path d="M204 50h31v12h-31z" {...G} /><path d="M200 22v57h58" stroke="#a19f9d" /></>,
  <>{axis(287, 24)}<path d="M289 27h11v49h-11z" {...B} /><path d="M300 41h10v35h-10zM321 54h10v22h-10z" {...W} /><path d="M310 50h11v26h-11zM331 39h11v37h-11z" {...G} /><path d="M284 22v57h58" stroke="#a19f9d" /></>,
  <>{axis(371, 24)}<path d="M373 31h11v12h-11zM373 55h24v12h-24z" {...W} /><path d="M383 31h33v12h-33z" {...B} /><path d="M397 55h19v12h-19z" {...G} /></>,
  <>{axis(455, 24)}<path d="M464 66h12v10h-12zM488 46h12v30h-12z" {...W} /><path d="M464 31h12v35h-12z" {...B} /><path d="M488 31h12v15h-12z" {...G} /></>,
  <>{axis(35, 108)}<path d="M36 150l16-22 12 8 20-16" stroke="#2b88d8" /><path d="M36 140l16-14 14 14 20-20" stroke={INK} /></>,
  <><path d="M152 158l8-50 12 24v28z" {...G} /><path d="M117 140l17-28 36 48h-53z" {...W} /><path d="M118 160v-18l10 8 26-18 17 28z" {...B} /></>,
  <>{axis(203, 108)}<path d="M204 113l14 12 14-10 10 8 14-12v16l-14 18-10-8-12 12-16-10z" {...B} /></>,
  <>{axis(287, 108)}<path d="M288 115h52v28l-8 8-12-16-12 16-20-16z" {...B} /></>,
  <>{axis(371, 108)}<path d="M380 115h12v28h-12z" {...B} /><path d="M404 115h12v18h-12z" {...G} /><path d="M380 143h12v17h-12zM404 134h12v26h-12z" {...W} /><path d="M372 152l18-20 12 12 21-14" stroke={INK} /></>,
  <>{axis(455, 108)}<path d="M464 133h10v27h-10z" {...B} /><path d="M474 112h14v48h-14z" {...W} /><path d="M488 118h12v42h-12z" {...G} /><path d="M456 156l18-16 16 10 16-14" stroke={INK} /></>,
  <><path d="M38 226h10v18H38zM70 222h12v20H70z" fill="#f7a644" stroke="#d8731a" /><path d="M37 198q12 22 24 10t22-10v16q-10 0-20 12-4 4-8 0-8-12-18-12z" {...G} /><path d="M37 220q8-4 16 6 7 10 14 0 8-10 17-8v12q-8-2-14 6-10 12-22 0-4-6-11-6z" {...B} />{axis(35, 192)}</>,
  <>{axis(119, 192)}<path d="M125 201h9v42h-9zM134 210h12v33h-12zM158 196h10v47h-10z" {...W} /><path d="M146 206h7v-12h8v28h-8v-12h-7z" fill={BLUE} stroke="none" /></>,
  <><path d="M202 196h52v14h-52zM211 210h34v16h-34zM219 226h18v15h-18z" {...B} /></>,
  <>{axis(287, 192)}<path d="M295 205h8v8h-8zM309 213h8v8h-8zM324 225h8v8h-8z" fill={SKY} stroke="none" /><path d="M324 196h8v8h-8zM295 229h8v8h-8z" fill={INK} stroke="none" /></>,
  <><circle cx="396" cy="219" r="26" {...W} /><path d="M396 193a26 26 0 0117 45l-17-19z" {...B} /></>,
  <><circle cx="480" cy="219" r="20" stroke={BLUE} strokeWidth="15" /><circle cx="480" cy="219" r="19.500" stroke={SKY} strokeWidth="10" /><path d="M461 219a19 19 0 0119-19" stroke="#fff" strokeWidth="11" /><path d="M454 219a26 26 0 0126-26" stroke={INK} /></>,
  <><path d="M35 277h51v52H35z" {...W} /><path d="M36 278h22v26H36zM36 304h22v25H36z" {...B} /><path d="M59 290h27M71 290v39M59 304h12M71 310h15" stroke={INK} /></>,
  <><path d="M132 280q-14 12-6 32t26 14q12-4 16-20M144 326v8M128 334h34" stroke={INK} /><circle cx="147" cy="300" r="18" {...W} /><path d="M138 290q10-8 14 0t-8 12q-8-4-6-12zM152 302h10l-4 12-8-2z" fill="#2ea043" stroke="none" /></>,
  <><path d="M204 284l10-2 10 6 14-6 16-4v12l-6 28-14 8-16-2-14-10z" {...G} /><path d="M204 282h18v18q-6 4-6 12l-12-8zM230 304h18l4 14-16 8-10-8z" {...B} /></>,
  <><path d="M322 273L290 326l28-17z" fill="#4fb0e2" stroke="none" /><path d="M322 273l14 59-18-23z" fill="#1f7fc4" stroke="none" /></>,
  <><path d="M371 316a25 25 0 0116-23l5 13a11 11 0 00-7 10z" fill="#fff" stroke={INK} /><path d="M387 293a25 25 0 0124 3l-9 12a11 11 0 00-10-2z" {...B} /><path d="M411 296a25 25 0 0110 20h-14a11 11 0 00-5-8z" {...B} /><path d="M390 318l18-24" stroke={INK} strokeWidth="4" /></>,
  <><path d="M455 283h51v39h-51z" {...W} /><text x="460" y="309" fontSize="26" fontWeight="600" textLength="41" lengthAdjust="spacingAndGlyphs" fontFamily="Open Sans, sans-serif" fill="#2b88d8" stroke="none">123</text><path d="M460 315h40" stroke={GREY} /></>,
  <><path d="M35 362h51v50H35z" {...W} /><path d="M44 370v34" stroke="#8a8886" /><path d="M50 376h28M50 393h20" stroke={BLUE} strokeWidth="4" /><path d="M50 384h20M50 401h28" stroke="#8a8886" /></>,
  <><path d="M119 365h51v42h-51z" {...W} /><path d="M133 370l8 17h-16z" fill="#4caf50" stroke="none" /><path d="M154 390l-10-17h20z" fill="#e81123" stroke="none" /><path d="M124 397h40" stroke={GREY} /></>,
  <><path d="M203 362h52v50h-52z" {...W} /><path d="M203 362h52v9h-52z" {...G} /><path d="M212 380h9v8h-9zM212 396h9v8h-9z" {...G} /><path d="M228 389h28l-9 12v14h-9v-14z" {...W} /></>,
  <><path d="M287 362h51v50h-51z" {...W} /><path d="M287 362h51v9h-51z" {...G} /><path d="M287 384h51M287 398h51M304 371v41M321 371v41" stroke="#605e5c" /></>,
  <><path d="M371 362h51v50h-51z" {...W} /><path d="M405 371h17v41h-17zM388 398h34v14h-34z" fill={SKY} stroke={BLUE} /><path d="M371 362h51v9h-51z" {...G} /><path d="M371 384h51M371 398h51M388 371v41M405 371v41" stroke="#605e5c" /></>,
  <><text x="463" y="402" fontSize="43" fontWeight="700" textLength="28" lengthAdjust="spacingAndGlyphs" fontFamily="Open Sans, sans-serif" fill="#2b88c8" stroke="none">R</text></>,
  <><text x="32" y="483" fontSize="46" fontWeight="700" textLength="55" lengthAdjust="spacingAndGlyphs" fontFamily="Open Sans, sans-serif" fill="#2b88c8" stroke="none">Py</text></>,
  <>{axis(119, 443)}<path d="M120 454h34" stroke={BLUE} /><circle cx="160" cy="454" r="6" {...B} /><path d="M120 469h24M120 483h12" stroke="#605e5c" /><circle cx="148" cy="469" r="4" {...W} /><circle cx="136" cy="483" r="4" {...W} /></>,
  <><path d="M219 469h16M228 452v34M228 452h8M228 486h8" stroke={INK} /><path d="M202 463h17v12h-17zM235 446h18v12h-18zM235 463h18v12h-18zM235 481h18v12h-18z" {...B} /></>,
  <><path d="M286 448h52v32h-28l-14 13v-13h-10z" fill="#fff" stroke={BLUE} /></>,
  <><path d="M376 446h26l13 13v37h-39zM402 446v14h13" {...W} /><path d="M373 460h10v10h-10z" {...B} /><path d="M386 467h20M382 481h26" stroke={BLUE} /></>,
  <><path d="M467 446h27v22q-2 12-13 14-12-2-14-14zM467 450h-12q0 18 14 20M494 450h12q0 18-14 20M480 482v10" {...W} /><path d="M467 491h27v5h-27z" {...B} /><path d="M467 446h27" stroke={BLUE} /></>,
  <><path d="M39 529h27l14 14v40H39z" {...G} stroke={INK} /><path d="M66 529v15h14" stroke={INK} /><path d="M48 567v9M60 560v16M71 554v22" stroke={INK} strokeWidth="6" /></>,
  <><path d="M119 536h51v37h-51z" {...W} /><text x="131" y="562" fontSize="26" textLength="36" lengthAdjust="spacingAndGlyphs" fontWeight="600" fontFamily="Open Sans, sans-serif" fill="#2b88d8" stroke="none">123</text><path d="M122 569h44" stroke={GREY} /><path d="M121 528h18l-8 12h8l-22 22 6-16h-7z" fill="#fbc56d" stroke="#d8731a" /></>,
  <><path d="M231 531h19v18h-19zM203 558h19v19h-19z" {...W} /><path d="M205 528h18l-8 12h8l-22 22 6-16h-7z" fill="#fbc56d" stroke="#d8731a" /><path d="M229 556h28l-9 12v14h-9v-14z" {...W} /></>,
  <><path d="M290 531h46v22l-12 12-14 15h-20z" {...B} /><path d="M296 578q4-20 18-20t10-26" stroke="#fff" strokeWidth="8" /><path d="M290 556q-16-16-8-27 8-6 16 0 8 11-8 27z" fill="#d8731a" stroke="none" /><path d="M323 568h14v14h-14zM329 557h9v8h-9z" fill="#d8731a" stroke="none" /></>,
  <><path d="M396 529l26 26-26 26-26-26zM383 542l26 26M409 542l-26 26" fill="#f6e9f7" stroke="#8e2f9c" /></>,
  <><path d="M454 532h31l21 22-21 21h-31l20-21zM464 542h30M474 554l-20 21M490 538l-28 36M498 546l-26 28" fill="#fff" stroke="#2b88d8" /></>,
];

function VisualizationsPanel() {
  return (
    <section className="flex w-[182px] shrink-0 flex-col border-x border-[#d6d4d2] bg-[#f3f2f1] text-[#252423]">
      <div className="flex h-[38px] items-center pl-[8px] pr-[8px]"><h2 className="text-[15px] font-semibold">Visualizations</h2><DoubleChevron className="ml-auto h-[13px] w-[13px]" /></div>
      <div className="h-[19px] pl-[8px] text-[11.400px] font-semibold leading-[15px]">Build visual</div>
      <div className="flex h-[33px] pl-[8px]">
        <div className="flex h-[32px] w-[32px] items-center justify-center rounded-[2px] bg-[#d2d0ce]"><svg viewBox="170 182 74 75" className="h-[25px] w-[25px]" fill="#117865" stroke={INK} strokeWidth="3"><path d="M171 185h57" /><path d="M172 199h70v22h-70zM172 232h70v22h-70z" strokeDasharray="5 3" /></svg></div>
        <svg viewBox="368 182 75 75" className="ml-[38px] mt-[4px] h-[25px] w-[25px]" fill="none" stroke={INK} strokeWidth="3"><path d="M390 253h-20v-69h32l18 20v10M401 184v21h19" fill="#fafafa" /><path d="M438 209l-30 32-4-6zM404 236q-12 2-14 16 12 4 18-10" fill="#fafafa" /></svg>
      </div>
      <svg viewBox="0 0 180 12" className="h-[12px] w-full" fill="none" stroke="#8a8886"><path d="M0 11.500h16l8-8 8 8h148" /></svg>
      <div className="ml-[6px] mt-[6px] grid w-[168px] grid-cols-6">
        {visuals.map((v, i) => (
          <div key={i} className="flex h-[28px] items-center justify-center">
            <svg viewBox={`${30 + 84 * (i % 6)} ${21 + 84 * Math.floor(i / 6)} 60 60`} className="h-[20px] w-[20px] overflow-visible" fill="none" strokeWidth="3">{v}</svg>
          </div>
        ))}
      </div>
      <div className="flex h-[33px] gap-[4px] border-b border-[#d6d4d2] pl-[13px] pt-[12px]">{[0, 1, 2].map((i) => <i key={i} className="h-[2px] w-[2px] bg-[#3b3a39]" />)}</div>
      <div className="px-[12px] pt-[8px] text-[11.500px] leading-[18px]">Values</div>
      <div className="mx-[4px] mt-[4px] h-[28px] w-[170px] rounded-[2px] border border-dashed border-[#b9b7b5] bg-white pl-[10px] text-[11.450px] leading-[27px]">Add data fields here</div>
      <div className="mt-[9px] px-[12px] text-[11.500px] font-semibold leading-[18px] text-[#605e5c]">Drill through</div>
      <div className="mt-[6px] flex h-[22px] items-center pl-[12px] pr-[22px] text-[11.450px]">Cross-report
        <span className="ml-auto flex h-[16px] w-[32px] items-center gap-[2px] rounded-full border border-[#8a8886] bg-white pl-[4px] text-[9.500px] text-[#605e5c]"><i className="h-[8px] w-[8px] rounded-full bg-[#605e5c]" />Off</span>
      </div>
      <div className="mt-[5px] flex h-[22px] items-center pl-[12px] pr-[22px] text-[11.450px]">Keep all filters
        <span className="ml-auto flex h-[16px] w-[32px] items-center gap-[2px] rounded-full bg-[#117865] pl-[5px] text-[9.500px] font-semibold text-white">On<i className="h-[8px] w-[8px] rounded-full bg-white" /></span>
      </div>
      <div className="mx-[4px] mt-[7px] h-[26px] w-[170px] whitespace-nowrap rounded-[2px] border border-dashed border-[#b9b7b5] bg-white pl-[8px] text-[11.500px] leading-[26px]">Add drill-through fields here</div>
    </section>
  );
}

const tables: [string, boolean][] = [["_Measures", true], ["Calender_Table", true], ["Dim_Customer", false], ["Dim_Location", false], ["Dim_Product", false], ["Fact_Table", false], ["Returns", false]];

function DataPanel() {
  return (
    <section className="flex w-[180px] shrink-0 flex-col bg-[#f3f2f1] text-[#323130]">
      <div className="flex h-[38px] items-center pl-[8px] pr-[8px]"><h2 className="text-[15px] font-semibold">Data</h2><DoubleChevron className="ml-auto h-[13px] w-[13px]" /></div>
      <div className="ml-[4px] mt-[7px] flex h-[24px] w-[172px] items-center rounded-[4px] border border-[#c8c6c4] border-b-[#605e5c] bg-white text-[12.900px] text-[#605e5c]">
        <svg viewBox="0 0 15 15" className="ml-[12px] h-[15px] w-[15px]" fill="none" stroke="#605e5c" strokeWidth="1.100"><circle cx="6.200" cy="6.200" r="5.200" /><path d="M10 10l4.500 4.500" /></svg>
        <span className="ml-[6px] pt-[1px]">Search</span>
      </div>
      <div className="mt-[9px]">
        {tables.map(([name, calc]) => (
          <div key={name} className="flex h-[24px] items-center pl-[15px] text-[11.400px]">
            <svg viewBox="0 0 7 12" className="h-[12px] w-[7px]" fill="none" stroke="#605e5c"><path d="M.7.7L6.200 6 .7 11.300" /></svg>
            <svg viewBox="0 0 14 14" className="ml-[7px] h-[14px] w-[14px]" fill="none" stroke="#252423">
              {calc ? <><path d="M13 5V2.500Q13 1 11.500 1h-9Q1 1 1 2.500v8Q1 12 2.500 12H6M1 4.500h12M1 8h5M4.500 1v11M9 1v3" /><rect x="7" y="5.500" width="6.500" height="8" fill="#fff" /><path d="M7 7.500h6.500M8 9.500h5M8 11.500h5" strokeDasharray="1 1" /></> : <><rect x="1" y="1.500" width="11.500" height="11" rx="2" /><path d="M1 5h11.500M1 9h11.500M4.700 1.500v11M8.700 1.500v11" /></>}
            </svg>
            <span className="ml-[4px] pt-[1px]">{name}</span>
          </div>
        ))}
      </div>
    </section>
  );
}

/* --------------------------------------------------- page tabs & status bar */

function PageTabs() {
  return (
    <div className="flex h-[35px] w-[963px] bg-[#f3f2f1] text-[11.300px] text-[#252423]">
      <div className="flex w-[128px] border-r border-[#a19f9d]">
        <div className="ml-[10px] flex w-[24px] flex-col items-center"><svg viewBox="0 0 20 15" className="mt-[7px] h-[15px] w-[20px]" fill="none" stroke="#3b3a39" strokeWidth="1.300"><path d="M1 .8h18v10.500H1zM10 11.500v2.500M6.500 14.200h7" /></svg><i className="mt-[6px] h-[3px] w-[24px] rounded bg-[#117865]" /></div>
        <svg viewBox="0 0 14 21" className="ml-[25px] mt-[5px] h-[21px] w-[14px]" fill="none" stroke="#3b3a39" strokeWidth="1.300"><rect x="1" y="1" width="12" height="19" rx="1.500" /><path d="M6 17h2" /></svg>
        <svg viewBox="0 0 28 8" className="ml-[20px] mt-[14px] h-[8px] w-[28px]" fill="#c8c6c4"><path d="M5 0v8L0 4zM23 0v8l5-4z" /></svg>
      </div>
      <div className="flex w-[77px] items-center justify-center border-r border-[#c8c6c4] bg-white pt-[3px]">Page 1</div>
      <div className="flex w-[76px] items-center justify-center border-r border-[#c8c6c4] bg-white pt-[3px]">Page 2</div>
      <div className="flex w-[77px] items-center justify-center border-r border-[#c8c6c4] bg-white pt-[3px]">Page 3</div>
      <div className="relative flex w-[76px] items-center justify-center border-b-4 border-[#117865] bg-white pt-[6px] text-[11.900px] font-semibold">Page 4<span className="absolute right-[4px] top-[4px] text-[9px] font-normal leading-3">x</span></div>
      <div className="flex w-[40px] items-center justify-center bg-[#117865]"><svg viewBox="0 0 11 11" className="h-[11px] w-[11px]" stroke="#fff" strokeWidth="2"><path d="M5.500 0v11M0 5.500h11" /></svg></div>
    </div>
  );
}

function StatusBar() {
  return (
    <footer className="flex h-[24px] shrink-0 items-center border-t border-[#d6d4d2] bg-[#f3f2f1] pt-[3px] text-[11.600px] text-[#484644]">
      <span className="ml-[4px] w-[957px]">Page 4 of 4</span>
      <svg viewBox="0 0 126 14" className="-mt-[3px] h-[14px] w-[126px]" stroke="#605e5c" fill="none"><path d="M1 8h5" strokeWidth="1.800" /><path d="M11 7.500h99M60.500 5v5M116 7.500h8M120 3.500v8" strokeWidth="1.200" /><rect x="42.500" y="2" width="3" height="11" fill="#605e5c" /></svg>
      <span className="-mt-[2px] ml-[11px] w-[42px]">71%</span>
      <svg viewBox="0 0 16 12" className="h-[12px] w-[16px] -translate-y-[1px]" fill="none" stroke="#484644"><path d="M.5.5h15v11H.5z" /><path d="M3 5V3h2M11 3h2v2M13 7v2h-2M5 9H3V7" /></svg>
      <span className="ml-[14px] whitespace-nowrap text-[11.450px]">Update available (click to download)</span>
    </footer>
  );
}

/* ------------------------------------------------------------------ taskbar */

function Chrome({ face }: { face?: boolean }) {
  return (
    <svg viewBox="0 0 26 26" className="h-[26px] w-[26px]"><circle cx="13" cy="13" r="12" fill="#fbc116" /><path d="M13 13L2.600 7A12 12 0 0123.400 7z" fill="#e33b2e" /><path d="M13 13L2.600 7A12 12 0 0013 25l5-9z" fill="#2da94f" /><circle cx="13" cy="13" r="6" fill="#fff" /><circle cx="13" cy="13" r="4.600" fill="#3b7ded" />{face && <g><circle cx="19" cy="19" r="6.500" fill="#3d3330" /><circle cx="19" cy="17" r="2.500" fill="#c99a80" /><path d="M16 21l6-1v5h-6z" fill="#ddd" /></g>}</svg>
  );
}

function Slot({ w, line, on, children }: Kids & { w: string; line?: string; on?: boolean }) {
  return (
    <div className={`flex h-full ${w} shrink-0 flex-col items-center ${on ? "bg-[#4a4e4f]" : ""}`}>
      <div className="flex h-[38px] items-center">{children}</div>
      {line && <i className={`h-[2px] ${line} bg-[#f48b98]`} />}
    </div>
  );
}

function Taskbar() {
  return (
    <div className="flex h-[41px] shrink-0 items-center bg-[#202425] pt-[1px] text-white">
      <div className="flex w-[48px] justify-center"><svg viewBox="0 0 16 16" className="h-[16px] w-[16px]" fill="#fff"><path d="M0 0h7.600v7.600H0zM8.400 0H16v7.600H8.400zM0 8.400h7.600V16H0zM8.400 8.400H16V16H8.400z" /></svg></div>
      <div className="flex h-[40px] w-[288px] items-center border border-[#5b5d5e] bg-[#333333]">
        <svg viewBox="0 0 17 17" className="ml-[11px] h-[17px] w-[17px]" fill="none" stroke="#fff" strokeWidth="1.200"><circle cx="10.500" cy="6.500" r="5.500" /><path d="M6.500 10.500l-6 6" /></svg>
        <span className="ml-[11px] pt-[1px] text-[14px] text-[#d8d8d8]">Type here to search</span>
        <svg viewBox="0 0 80 38" className="ml-auto h-[38px] w-[80px] self-end">
          <path d="M8 22q16-12 32-14t38 8v16H10z" fill="#b9c98a" /><path d="M20 20q30-10 56 2v8H22z" fill="#e8c8b8" />
          {[{ x: 2, y: 6 }, { x: 19, y: 3 }, { x: 38, y: 1 }, { x: 57, y: 5 }].map((p, i) => (
            <g key={i}><path d={`M${p.x + 2} 38q1-20 9-${34 - p.y}q3-3 6 0q5 16 3 34z`} fill={i % 2 ? "#e07a30" : "#f0934b"} /><path d={`M${p.x + 10} ${p.y + 7}q3 2 7 0M${p.x + 8} ${p.y + 13}q5 2 11 0M${p.x + 6} ${p.y + 20}q7 3 13 0`} fill="none" stroke="#b55418" strokeWidth="1" /></g>
          ))}
          <path d="M4 38q2-8 8-10 6-1 8 5 4-7 10-5 5 0 7 5 5-6 11-4 5 0 7 4 7-5 13-1v6z" fill="#f7b98a" />
        </svg>
      </div>
      <Slot w="w-[54px]"><div className="flex flex-col items-center"><CopilotMark className="h-[21px] w-[24px]" vb="922 230 88 86" /><span className="-mt-[2px] bg-[#101213] px-[1px] text-[7.500px] font-bold leading-[8px]">M365</span></div></Slot>
      <Slot w="w-[43px]"><svg viewBox="0 0 26 24" className="h-[24px] w-[26px]"><path d="M8 2L16 0l8 6v7l-12 9-6-6z" fill="#1a86d9" /><path d="M6 12l9 4 10-6v11q0 2-2 2H8q-2 0-2-2z" fill="#4cc2f5" /><path d="M25 10L9 23h14q2 0 2-2z" fill="#1478c8" /><rect x="1" y="8" width="12" height="12" rx="1.500" fill="#0f5fb8" /><circle cx="7" cy="14" r="3" fill="none" stroke="#fff" strokeWidth="1.800" /></svg></Slot>
      <Slot w="w-[56px]" line="w-[40px]"><svg viewBox="0 0 26 26" className="h-[26px] w-[26px]"><path d="M2 24l2-6.500A11 11 0 119 22.500z" fill="#1c2422" stroke="#25d366" strokeWidth="2.200" /><path d="M8.500 7.500q1.500-1.500 2.500.5l1 2.500-1.200 1.500q1.200 2.500 4 3.600l1.500-1.600 2.900 1.500q.8 1.500-1.200 3-3 1.500-7.500-2.500T8 8.500z" fill="#25d366" /></svg></Slot>
      <Slot w="w-[42px]"><CopilotMark className="h-[24px] w-[24px]" vb="922 230 88 86" /></Slot>
      <Slot w="w-[56px]"><Chrome /></Slot>
      <Slot w="w-[41px]"><svg viewBox="0 0 22 20" className="h-[20px] w-[22px]"><path d="M0 1h9l2 3h11v16H0z" fill="#f0b429" /><path d="M0 6h22v14H0z" fill="#fbd568" /><path d="M3 11h16v9h-4v-4H7v4H3z" fill="#3f8fd8" /></svg></Slot>
      <Slot w="w-[58px]"><svg viewBox="0 0 26 26" className="h-[26px] w-[26px]"><path d="M1 13A12 12 0 0125 13q0 5-6 5-4 0-3-3 1-4-3-6-6-2-12 4z" fill="#35c1b1" /><path d="M13 1q12 1 12 11 0 6-6 6-4 0-3-3 1-8-6-9z" fill="#63d86b" opacity=".8" /><path d="M1 13Q5 7 11 8q-6 3-4 9 3 8 13 6-6 4-12 1T1 13z" fill="#1470c8" /><path d="M11 8q-8 6-3 12 5 5 12 3 2-1 3-3-6 2-9-1-4-4-3-11z" fill="#0d4f9e" /></svg></Slot>
      <Slot w="w-[40px]" line="w-[40px]"><Chrome face /></Slot>
      <div className="w-[5px]" />
      <Slot w="w-[48px]" line="w-[48px]" on><svg viewBox="0 0 20 24" className="h-[24px] w-[20px]"><rect x="11" y="0" width="9" height="24" rx="1" fill="#e6ad10" /><rect x="6" y="6" width="9" height="18" rx="1" fill="#f2c811" /><rect x="0" y="12" width="9" height="12" rx="1" fill="#f9e589" /></svg></Slot>
      <svg viewBox="0 0 24 16" className="ml-[198px] h-[16px] w-[24px]"><path d="M0 5l5-4 6 7 4-5 3 2 2 2 3-3v12H11l4-4-3-2-4 3z" fill="#e0510f" /><path d="M0 5l5-4 3 4-5 5z" fill="#a12a16" /></svg>
      <span className="ml-[7px] w-[44px] text-[13.400px]">MFPC</span>
      <span className="w-[63px] whitespace-nowrap text-[13.600px] text-[#ee5a5f]">٪1,12-</span>
      <svg viewBox="0 0 90 16" className="h-[16px] w-[90px]" fill="none" stroke="#fff" strokeWidth="1.200">
        <path d="M2 11l5.500-5.500L13 11M24 6h2l4-3.500v11L26 10h-2zM32 5.500q2 2.500 0 5M34.500 4q3 4 0 8" /><path d="M37 2q4 6 0 12" stroke="#888" />
        <path d="M48 12q-1-4 3-4 2-4 6-2 2 1 2 3 4 0 4 3z" fill="#8d9091" stroke="none" /><path d="M48 2l15 12" />
        <path d="M75 5h13v8H77v-3M88.500 8v2" /><path d="M79 7h7v4h-7zM72 3h5v3q0 2-2.500 2T72 6zM73 1v2M76 1v2M74.500 8v5" fill="#fff" />
      </svg>
      <span className="ml-[7px] w-[35px] text-[11.300px]">ENG</span>
      <div className="w-[62px] text-center text-[11.200px] leading-[18px] tracking-[-0.100px]"><div>12:05</div><div>25/02/2025</div></div>
      <svg viewBox="0 0 26 28" className="ml-[15px] h-[28px] w-[26px]"><path d="M1 2h16v12H9l-4 4v-4H1z" fill="#fff" /><path d="M4 5h10M4 8h10M4 11h7" stroke="#202425" /><circle cx="17" cy="19" r="8" fill="#3a3e3f" stroke="#8d9091" /><text x="17" y="23" textAnchor="middle" fontSize="11" fill="#fff" fontFamily="Open Sans, sans-serif">3</text></svg>
      <i className="ml-auto mr-[3px] h-[40px] w-px bg-[#6b6e6f]" />
    </div>
  );
}

export default function App() {
  return (
    <div className="flex h-[768px] w-[1366px] flex-col overflow-hidden bg-[#f3f2f1] font-['Open_Sans','Noto_Sans',sans-serif]">
      <TitleBar />
      <Ribbon />
      <div className="flex h-[543px] shrink-0">
        <Rail />
        <div className="flex w-[963px] shrink-0 flex-col">
          <div className="flex h-[508px]"><Dashboard /><FiltersStrip /></div>
          <PageTabs />
        </div>
        <VisualizationsPanel />
        <DataPanel />
      </div>
      <StatusBar />
      <Taskbar />
    </div>
  );
}
